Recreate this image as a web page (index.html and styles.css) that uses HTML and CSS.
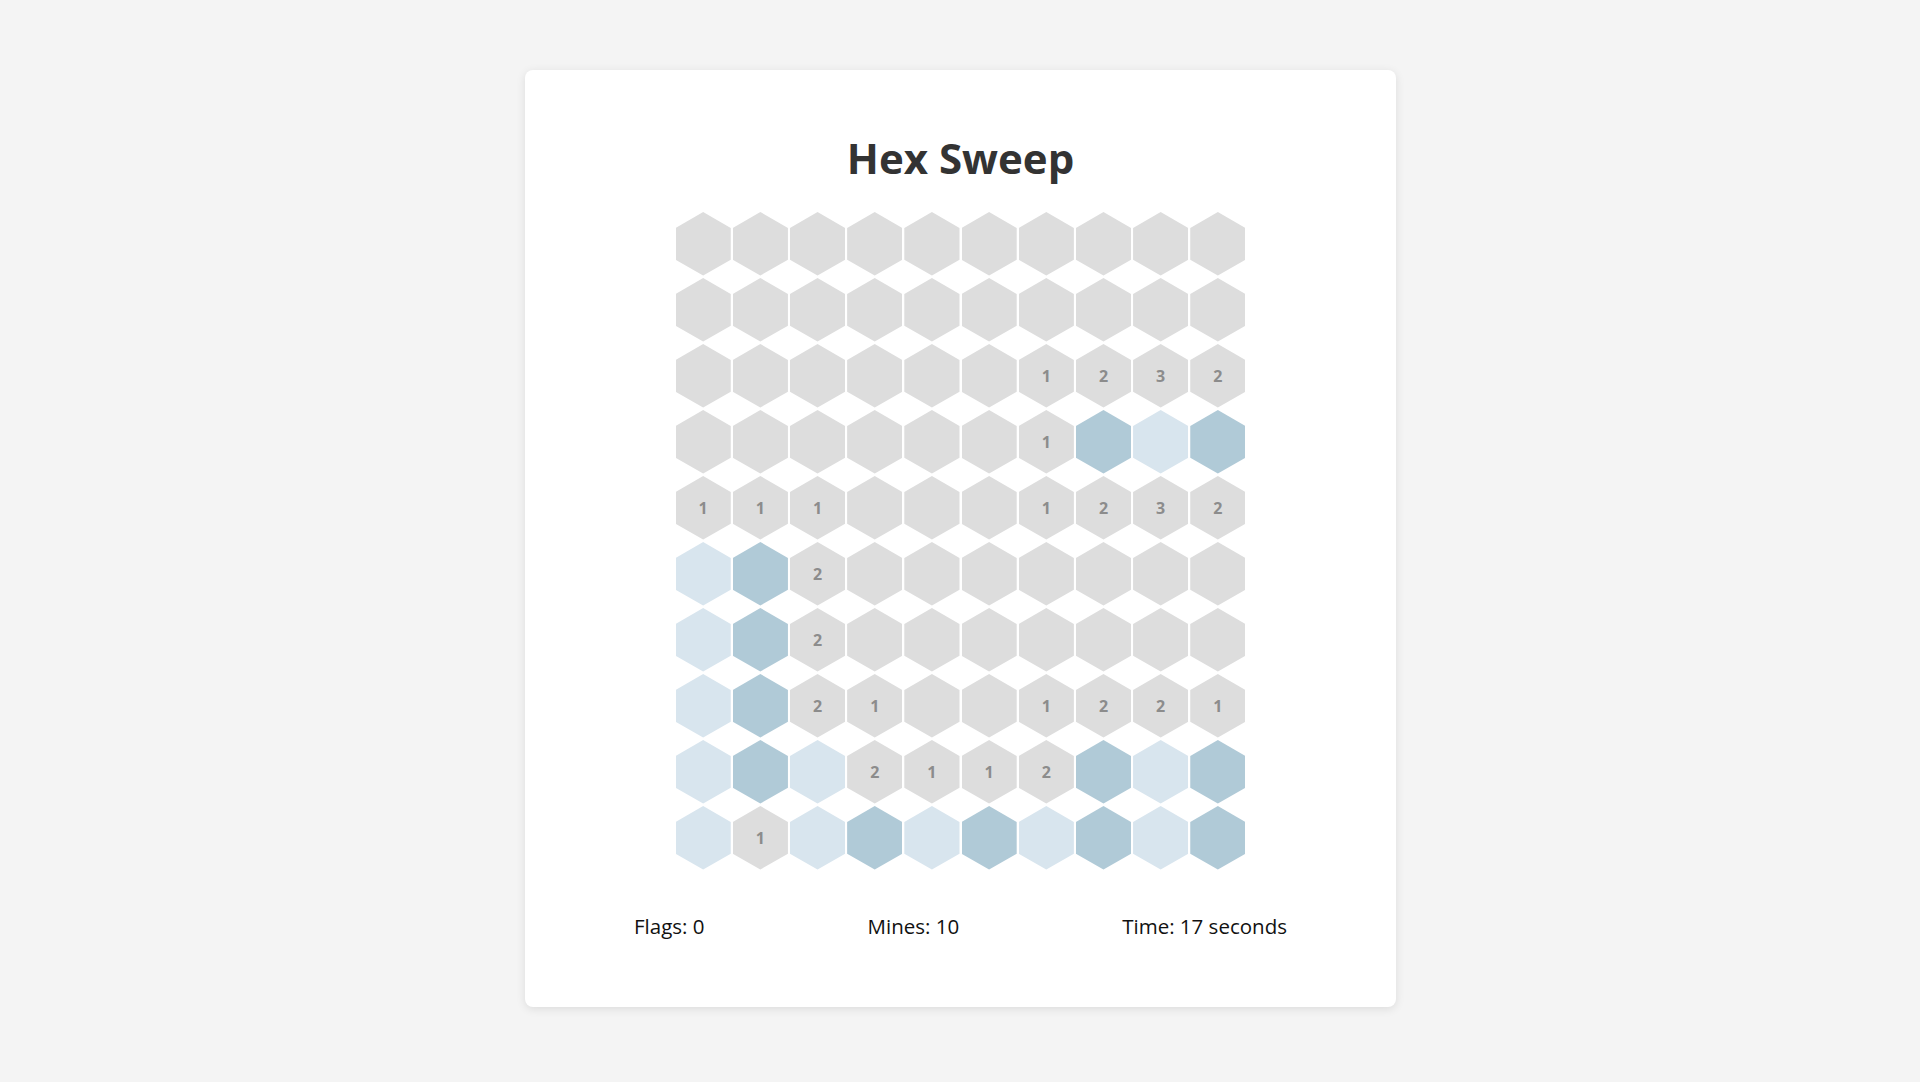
FILE: index.html
```html
<!DOCTYPE html>
<html lang="en">
<head>
<meta charset="utf-8">
<title>Hex Sweep</title>
<link rel="stylesheet" href="styles.css">
</head>
<body>
<main class="card">
  <h1 class="title">Hex Sweep</h1>
  <div class="board">
    <div class="hex"></div><div class="hex"></div><div class="hex"></div><div class="hex"></div><div class="hex"></div><div class="hex"></div><div class="hex"></div><div class="hex"></div><div class="hex"></div><div class="hex"></div>
    <div class="hex"></div><div class="hex"></div><div class="hex"></div><div class="hex"></div><div class="hex"></div><div class="hex"></div><div class="hex"></div><div class="hex"></div><div class="hex"></div><div class="hex"></div>
    <div class="hex"></div><div class="hex"></div><div class="hex"></div><div class="hex"></div><div class="hex"></div><div class="hex"></div><div class="hex">1</div><div class="hex">2</div><div class="hex">3</div><div class="hex">2</div>
    <div class="hex"></div><div class="hex"></div><div class="hex"></div><div class="hex"></div><div class="hex"></div><div class="hex"></div><div class="hex">1</div><div class="hex dark"></div><div class="hex light"></div><div class="hex dark"></div>
    <div class="hex">1</div><div class="hex">1</div><div class="hex">1</div><div class="hex"></div><div class="hex"></div><div class="hex"></div><div class="hex">1</div><div class="hex">2</div><div class="hex">3</div><div class="hex">2</div>
    <div class="hex light"></div><div class="hex dark"></div><div class="hex">2</div><div class="hex"></div><div class="hex"></div><div class="hex"></div><div class="hex"></div><div class="hex"></div><div class="hex"></div><div class="hex"></div>
    <div class="hex light"></div><div class="hex dark"></div><div class="hex">2</div><div class="hex"></div><div class="hex"></div><div class="hex"></div><div class="hex"></div><div class="hex"></div><div class="hex"></div><div class="hex"></div>
    <div class="hex light"></div><div class="hex dark"></div><div class="hex">2</div><div class="hex">1</div><div class="hex"></div><div class="hex"></div><div class="hex">1</div><div class="hex">2</div><div class="hex">2</div><div class="hex">1</div>
    <div class="hex light"></div><div class="hex dark"></div><div class="hex light"></div><div class="hex">2</div><div class="hex">1</div><div class="hex">1</div><div class="hex">2</div><div class="hex dark"></div><div class="hex light"></div><div class="hex dark"></div>
    <div class="hex light"></div><div class="hex">1</div><div class="hex light"></div><div class="hex dark"></div><div class="hex light"></div><div class="hex dark"></div><div class="hex light"></div><div class="hex dark"></div><div class="hex light"></div><div class="hex dark"></div>
  </div>
  <div class="stats">
    <span class="stat">Flags: 0</span>
    <span class="stat">Mines: 10</span>
    <span class="stat">Time: 17 seconds</span>
  </div>
</main>
</body>
</html>
```
FILE: styles.css
```css
html, body {
  margin: 0;
  padding: 0;
}
body {
  background: #f4f4f4;
  font-family: "Open Sans", "Noto Sans", sans-serif;
  color: #222;
  display: flex;
  justify-content: center;
  align-items: flex-start;
  min-height: 1082px;
  padding: 70px 0 0 1px;
  box-sizing: border-box;
}
.card {
  width: 871px;
  box-sizing: border-box;
  background: #fff;
  border-radius: 8px;
  box-shadow: 0 2px 10px rgba(0, 0, 0, 0.1);
  padding: 61px 28px 67px;
  display: flex;
  flex-direction: column;
  align-items: center;
}
.title {
  margin: 0 0 27px;
  font-size: 42px;
  font-weight: 700;
  color: #333;
  line-height: 54px;
}
.board {
  display: grid;
  grid-template-columns: repeat(10, 55.2px);
  grid-auto-rows: 63.5px;
  column-gap: 2px;
  row-gap: 2.5px;
}
.hex {
  background: #dddddd;
  clip-path: polygon(50% 0, 100% 25%, 100% 75%, 50% 100%, 0 75%, 0 25%);
  display: flex;
  align-items: center;
  justify-content: center;
  padding-top: 1px;
  box-sizing: border-box;
  font-size: 16px;
  font-weight: 700;
  color: #8c8c8c;
}
.hex.light {
  background: #d8e5ee;
}
.hex.dark {
  background: #b0cad7;
}
.stats {
  margin-top: 43px;
  width: 816px;
  display: flex;
  justify-content: space-around;
  font-size: 20.5px;
  line-height: 27px;
  color: #111;
}
```
